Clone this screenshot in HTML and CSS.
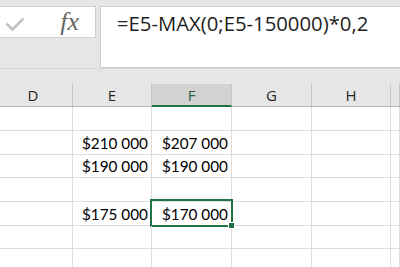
FILE: index.html
```html
<!DOCTYPE html>
<html lang="en">
<head>
    <meta charset="UTF-8">
    <title>Sheet</title>
    <link rel="stylesheet" href="styles.css">
</head>
<body>
    <div class="formula-bar">
        <div class="actions">
            <svg class="check" width="22" height="18" viewBox="0 0 22 18">
                <path d="M2.5 8.5 L8.5 14.5 L19.5 3.5" fill="none" stroke="#c4c4c4" stroke-width="2.8"/>
            </svg>
            <span class="fx">fx</span>
        </div>
        <div class="formula">=E5-MAX(0;E5-150000)*0,2</div>
    </div>
    <div class="gap"></div>
    <div class="sheet">
        <div class="head">D</div>
        <div class="head">E</div>
        <div class="head active">F</div>
        <div class="head">G</div>
        <div class="head">H</div>
        <div class="head"></div>

        <div class="cell"></div><div class="cell"></div><div class="cell"></div><div class="cell"></div><div class="cell"></div><div class="cell"></div>
        <div class="cell"></div><div class="cell">$210 000</div><div class="cell">$207 000</div><div class="cell"></div><div class="cell"></div><div class="cell"></div>
        <div class="cell"></div><div class="cell">$190 000</div><div class="cell">$190 000</div><div class="cell"></div><div class="cell"></div><div class="cell"></div>
        <div class="cell"></div><div class="cell"></div><div class="cell"></div><div class="cell"></div><div class="cell"></div><div class="cell"></div>
        <div class="cell"></div><div class="cell">$175 000</div><div class="cell sel">$170 000</div><div class="cell"></div><div class="cell"></div><div class="cell"></div>
        <div class="cell"></div><div class="cell"></div><div class="cell"></div><div class="cell"></div><div class="cell"></div><div class="cell"></div>
        <div class="cell"></div><div class="cell"></div><div class="cell"></div><div class="cell"></div><div class="cell"></div><div class="cell"></div>
    </div>
</body>
</html>
```

FILE: styles.css
```css
body {
    margin: 0;
    width: 400px;
    height: 267px;
    overflow: hidden;
    background-color: #ffffff;
    font-family: "Open Sans", "Liberation Sans", sans-serif;
}
.formula-bar {
    display: flex;
    gap: 4px;
    height: 62px;
    padding-top: 6px;
    background-color: #e6e6e6;
}
.actions {
    display: flex;
    align-items: flex-start;
    justify-content: space-between;
    width: 96px;
    height: 32px;
    padding: 0 16px 0 4px;
    box-sizing: border-box;
    background-color: #ffffff;
    border: 1px solid #d0d0d0;
    border-left: none;
}
.check {
    margin-top: 8px;
}
.fx {
    font-family: "Liberation Serif", serif;
    font-style: italic;
    font-size: 26px;
    line-height: 28px;
    color: #666666;
    margin-top: 1px;
}
.formula {
    flex: 1;
    background-color: #ffffff;
    border: 1px solid #cfcfcf;
    border-right: none;
    padding: 2px 0 0 16px;
    font-size: 20.3px;
    color: #1e1e1e;
}
.gap {
    height: 16px;
    background-color: #e6e6e6;
    border-top: 1px solid #d6d6d6;
    box-sizing: border-box;
}
.sheet {
    display: grid;
    grid-template-columns: 79px 79px 80px 80px 79px 1fr;
    grid-template-rows: 23px 24px 24px 23px 24px 24px 23px 24px;
    margin-left: -6px;
}
.head {
    display: flex;
    align-items: center;
    justify-content: center;
    background-color: #e6e6e6;
    border-right: 1px solid #c6c6c6;
    border-bottom: 1px solid #b4b4b4;
    font-size: 15px;
    color: #262626;
}
.head.active {
    background-color: #d2d2d2;
    color: #1f5c3a;
    border-bottom: 2px solid #217346;
}
.cell {
    position: relative;
    display: flex;
    align-items: center;
    justify-content: flex-end;
    padding-right: 3px;
    border-right: 1px solid #dcdcdc;
    border-bottom: 1px solid #dcdcdc;
    font-family: "Lato", "Liberation Sans", sans-serif;
    font-size: 15.3px;
    color: #000000;
}
.sel::after {
    content: "";
    position: absolute;
    top: -3px;
    left: -2px;
    right: -2px;
    bottom: -2px;
    border: 2px solid #217346;
}
.sel::before {
    content: "";
    position: absolute;
    right: -4px;
    bottom: -4px;
    width: 5px;
    height: 5px;
    background-color: #217346;
    border: 1px solid #ffffff;
    z-index: 1;
}
```
